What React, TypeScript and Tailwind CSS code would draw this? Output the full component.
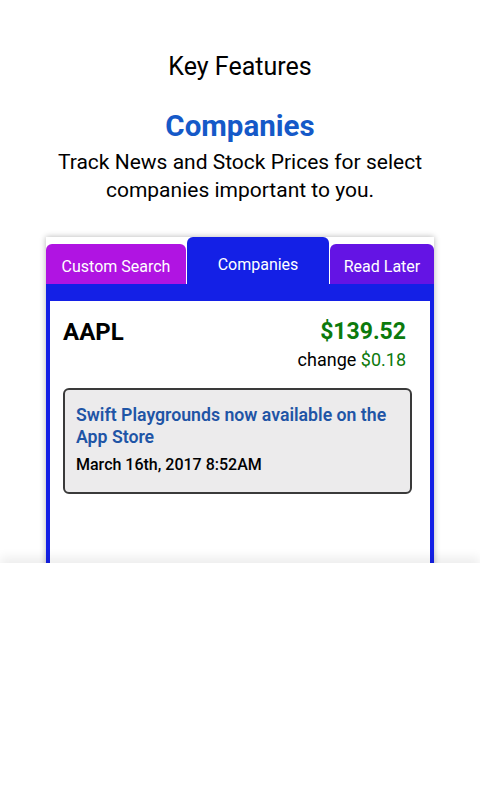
export default function App() {
  return (
    <div className="w-[480px] h-[800px] bg-white flex flex-col overflow-hidden font-['Roboto',sans-serif]">
      <div className="h-[563px] shrink-0 overflow-hidden flex flex-col items-center">
        <h1 className="mt-[51px] text-[25px] leading-[32px] text-black">Key Features</h1>
        <h2 className="mt-[26px] text-[29.5px] leading-[34px] font-bold text-[#1559c8]">Companies</h2>
        <p className="mt-[5px] text-[21px] leading-[28px] text-center text-black">
          Track News and Stock Prices for select
          <br />
          companies important to you.
        </p>
        <div className="mt-[33px] w-[388px] bg-white shadow-[0_0_6px_rgba(0,0,0,0.3)] flex flex-col shrink-0">
          <div className="h-[47px] flex items-end gap-[1px]">
            <div className="w-[140px] h-[40px] pt-[6px] rounded-t-[6px] bg-[#b014e2] text-white text-[16px] flex items-center justify-center">
              Custom Search
            </div>
            <div className="w-[142px] h-[47px] pt-[8px] rounded-t-[6px] bg-[#1420e6] text-white text-[16px] flex items-center justify-center">
              Companies
            </div>
            <div className="w-[104px] h-[40px] pt-[6px] rounded-t-[6px] bg-[#6414e4] text-white text-[16px] flex items-center justify-center">
              Read Later
            </div>
          </div>
          <div className="h-[17px] bg-[#1420e6]" />
          <div className="h-[320px] border-x-[4px] border-[#1420e6] bg-white pl-[13px] pr-[18px] pt-[17px] flex flex-col">
            <div className="flex justify-between items-start">
              <div className="text-[24px] leading-[28px] font-bold text-black">AAPL</div>
              <div className="mr-[6px] flex flex-col items-end">
                <div className="text-[23px] leading-[28px] font-bold text-[#0c7a0c]">$139.52</div>
                <div className="mt-[3px] text-[18px] leading-[22px] text-black">
                  change <span className="text-[#0c7a0c]">$0.18</span>
                </div>
              </div>
            </div>
            <div className="mt-[17px] border-2 border-[#3a3a3a] rounded-[6px] bg-[#ecebec] pl-[11px] pr-[11px] pt-[14px] pb-[17px]">
              <div className="text-[17.7px] leading-[22px] font-semibold text-[#1f55a6]">
                Swift Playgrounds now available on the App Store
              </div>
              <div className="mt-[7px] text-[16px] leading-[20px] font-medium text-black">
                March 16th, 2017 8:52AM
              </div>
            </div>
          </div>
        </div>
      </div>
      <div className="flex-1 bg-white relative z-10 shadow-[0_-6px_10px_rgba(0,0,0,0.07)]" />
    </div>
  );
}
